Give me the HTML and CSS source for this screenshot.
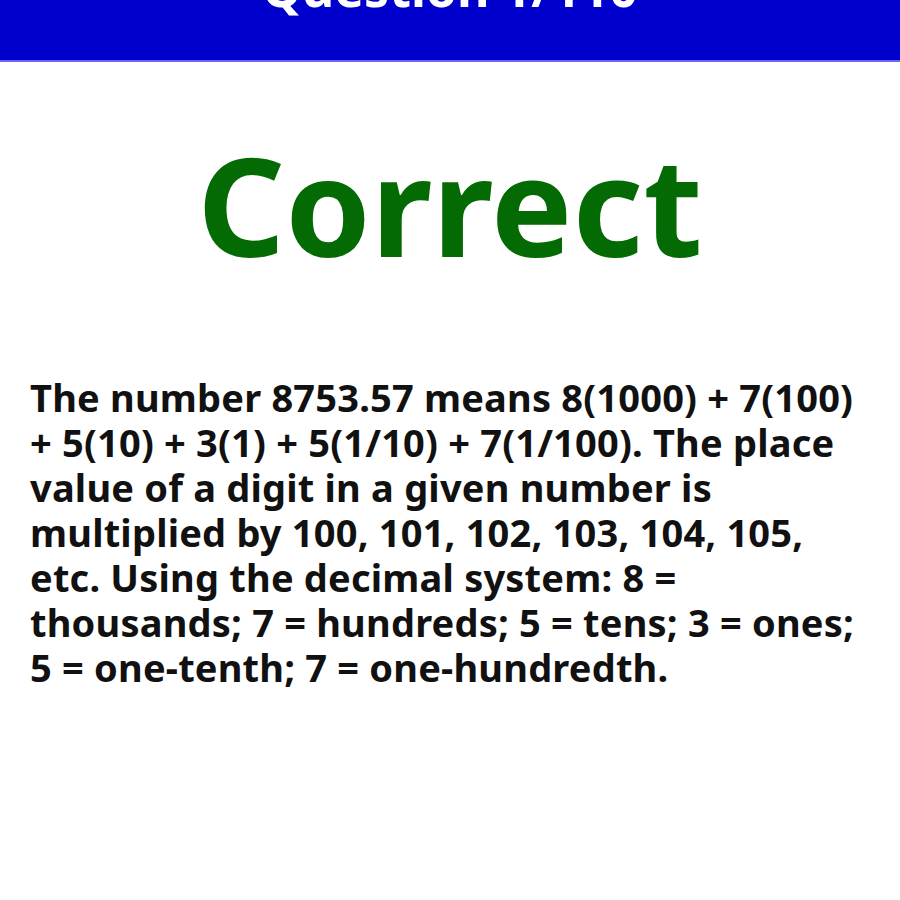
FILE: index.html
```html
<!DOCTYPE html>
<html>
<head>
<meta charset="utf-8">
<link rel="stylesheet" href="styles.css">
</head>
<body>
<header class="bar"><h1 class="bar-title">Question 1/110</h1></header>
<main class="content">
<h2 class="verdict">Correct</h2>
<p class="explain">The number 8753.57 means 8(1000) + 7(100) + 5(10) + 3(1) + 5(1/10) + 7(1/100). The place value of a digit in a given number is multiplied by 100, 101, 102, 103, 104, 105, etc. Using the decimal system: 8 = thousands; 7 = hundreds; 5 = tens; 3 = ones; 5 = one-tenth; 7 = one-hundredth.</p>
</main>
</body>
</html>
```
FILE: styles.css
```css
html, body {
  margin: 0;
  padding: 0;
  background: #ffffff;
  font-family: "Noto Sans", "Open Sans", sans-serif;
  font-weight: bold;
}
.bar {
  height: 60px;
  background: #0000cc;
  border-bottom: 2px solid #6a6af0;
  overflow: hidden;
  display: flex;
  justify-content: center;
  align-items: flex-end;
}
.bar-title {
  margin: 0 0 47px 0;
  color: #ffffff;
  font-size: 50px;
  line-height: 1;
  font-weight: bold;
}
.content {
  padding: 0 30px;
}
.verdict {
  margin: 0;
  padding-top: 74px;
  text-align: center;
  color: #046b04;
  font-size: 137px;
  line-height: 1;
  font-weight: bold;
}
.explain {
  margin: 102px 0 0 0;
  color: #111111;
  font-size: 38px;
  line-height: 45px;
  letter-spacing: 0.2px;
  font-weight: bold;
}
```
